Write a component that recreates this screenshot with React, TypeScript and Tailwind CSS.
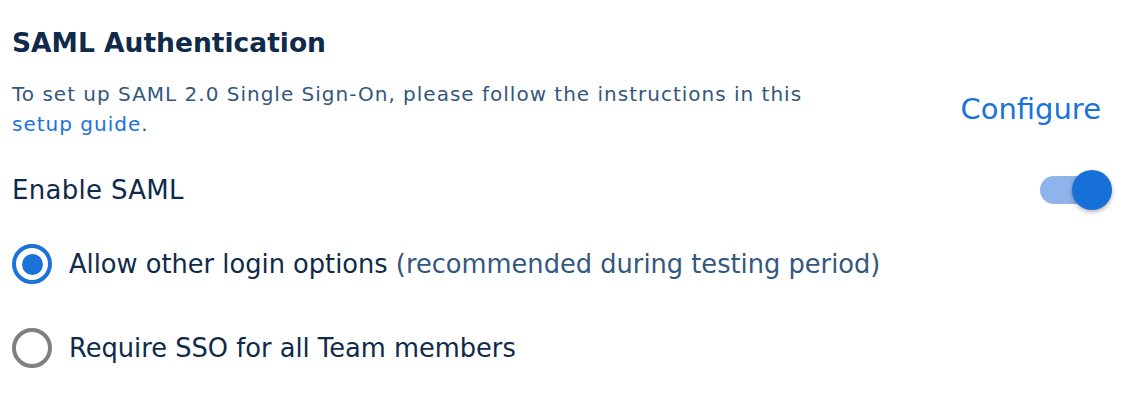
import React from "react";

export default function App() {
  return (
    <div
      className="w-[1140px] h-[404px] bg-white overflow-hidden pl-3 pr-[28px] pt-[27px]"
      style={{ fontFamily: "'DejaVu Sans', 'Open Sans', sans-serif" }}
    >
      <h2 className="text-[26.5px] leading-[32px] font-bold text-[#0f2a4a]">
        SAML Authentication
      </h2>
      <div className="mt-[20px] flex items-center justify-between pr-[11px]">
        <p className="w-[830px] text-[20px] leading-[30px] tracking-[1px] text-[#34577d]">
          To set up SAML 2.0 Single Sign-On, please follow the instructions in this{" "}
          <a className="text-[#1a73d9]">setup guide</a>.
        </p>
        <a className="text-[29px] leading-[36px] text-[#1a73d9]">Configure</a>
      </div>
      <div className="mt-[31px] flex items-center justify-between h-[40px]">
        <span className="text-[26px] tracking-[0.3px] text-[#0f2a4a]">Enable SAML</span>
        <div className="relative w-[72px] h-[40px]">
          <div className="absolute left-0 top-[6px] w-[58px] h-[28px] rounded-full bg-[#8fb3ea]" />
          <div className="absolute right-0 top-0 w-[40px] h-[40px] rounded-full bg-[#1670d8] shadow-[0_2px_4px_rgba(0,0,0,0.3)]" />
        </div>
      </div>
      <div className="mt-[34px] flex flex-col gap-[44px]">
        <label className="flex items-center gap-[17px] h-[40px]">
          <span className="w-[40px] h-[40px] rounded-full border-[4px] border-[#1a73d9] flex items-center justify-center">
            <span className="w-[21px] h-[21px] rounded-full bg-[#1a73d9]" />
          </span>
          <span className="text-[25.7px] text-[#0f2a4a]">
            Allow other login options{" "}
            <span className="text-[#34577d]">(recommended during testing period)</span>
          </span>
        </label>
        <label className="flex items-center gap-[17px] h-[40px]">
          <span className="w-[40px] h-[40px] rounded-full border-[4px] border-[#808080]" />
          <span className="text-[25.7px] text-[#0f2a4a]">Require SSO for all Team members</span>
        </label>
      </div>
    </div>
  );
}
